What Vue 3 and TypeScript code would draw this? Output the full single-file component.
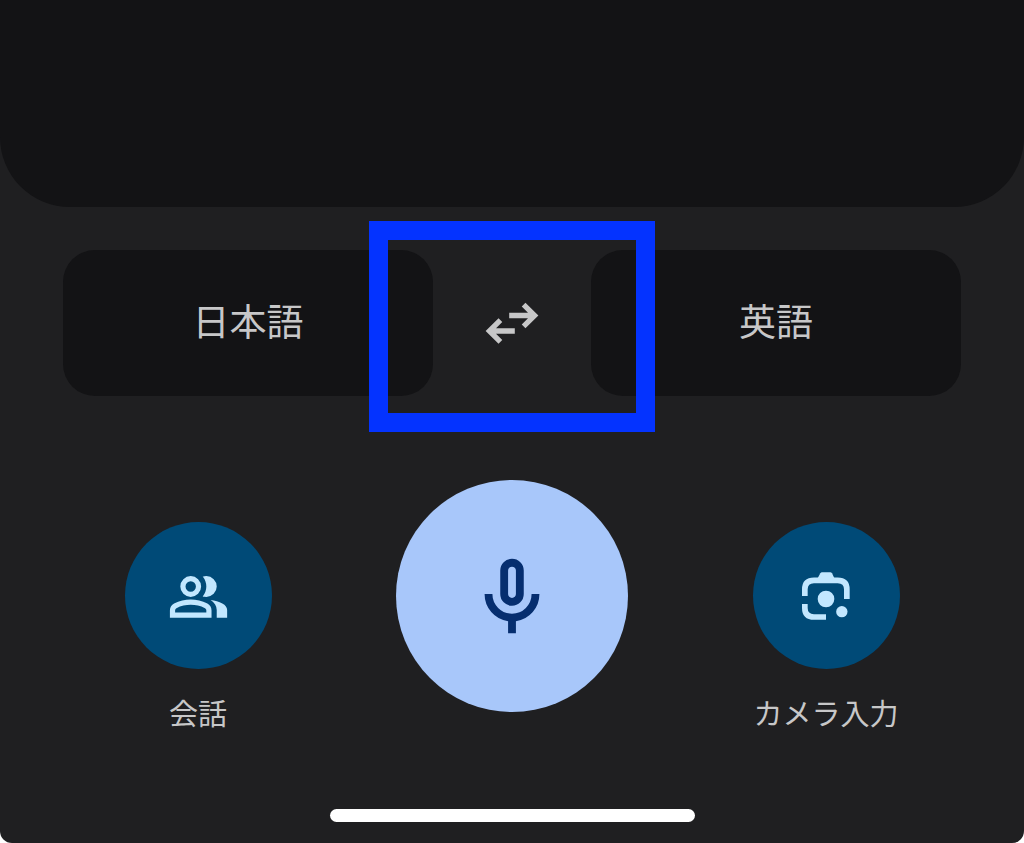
<script setup lang="ts">
import { ref } from 'vue'

const source = ref<string>('日本語')
const target = ref<string>('英語')

function swap(): void {
  const previous = source.value
  source.value = target.value
  target.value = previous
}
</script>

<template>
  <main class="screen">
    <section class="panel" aria-label="翻訳"></section>

    <div class="languages">
      <button type="button" class="language">{{ source }}</button>
      <div class="swap-cell">
        <button type="button" class="swap" aria-label="言語を入れ替え" @click="swap">
          <svg class="swap-icon" viewBox="0 0 56 46" fill="none" stroke="currentColor" stroke-width="5.3" aria-hidden="true">
            <path d="M25.2 15.5H50M39.6 4.7 50.6 15.5 39.6 26.3" />
            <path d="M30.8 31H6M16.4 20.2 5.4 31 16.4 41.8" />
          </svg>
        </button>
        <span class="highlight"></span>
      </div>
      <button type="button" class="language">{{ target }}</button>
    </div>

    <nav class="actions">
      <div class="action">
        <button type="button" class="round" aria-labelledby="talk-label">
          <svg class="icon" viewBox="-20 -986 984 984" fill="currentColor" aria-hidden="true">
            <path d="M40-160v-112q0-34 17.5-62.5T104-378q62-31 126-46.5T360-440q66 0 130 15.5T616-378q29 15 46.5 43.5T680-272v112H40Zm720 0v-120q0-44-24.5-84.5T666-434q51 6 96 20.500t84 35.500q36 20 55 44.500t19 53.500v120H760ZM360-480q-66 0-113-47t-47-113q0-66 47-113t113-47q66 0 113 47t47 113q0 66-47 113t-113 47Zm400-160q0 66-47 113t-113 47q-11 0-28-2.500t-28-5.500q27-32 41.500-71t14.500-81q0-42-14.500-81T544-792q14-5 28-6.500t28-1.500q66 0 113 47t47 113ZM120-240h480v-32q0-11-5.500-20T580-306q-54-27-109-40.500T360-360q-56 0-111 13.500T140-306q-9 5-14.500 14t-5.500 20v32Zm240-320q33 0 56.500-23.500T440-640q0-33-23.500-56.500T360-720q-33 0-56.500 23.500T280-640q0 33 23.500 56.500T360-560Z" />
          </svg>
        </button>
        <span id="talk-label" class="label">会話</span>
      </div>

      <button type="button" class="mic" aria-label="音声入力">
        <svg class="mic-icon" viewBox="0 -980 960 960" fill="currentColor" aria-hidden="true">
          <path d="M480-400q-50 0-85-35t-35-85v-240q0-50 35-85t85-35q50 0 85 35t35 85v240q0 50-35 85t-85 35Zm-40 280v-123q-104-14-172-93t-68-184h80q0 83 58.5 141.5T480-320q83 0 141.5-58.5T680-520h80q0 105-68 184t-172 93v123h-80Zm40-360q17 0 28.5-11.5T520-520v-240q0-17-11.5-28.5T480-800q-17 0-28.5 11.5T440-760v240q0 17 11.5 28.5T480-480Z" />
        </svg>
      </button>

      <div class="action">
        <button type="button" class="round" aria-labelledby="camera-label">
          <svg class="icon" viewBox="28 12 192 192" fill="currentColor" aria-hidden="true">
            <g fill="none" stroke="currentColor" stroke-width="17">
              <path d="M60.5 108V88Q60.5 61 88 61H159Q186.5 61 186.5 88V117" />
              <path d="M60.5 132V144Q60.5 171 88 171H124" />
            </g>
            <path d="M98 56 107 40Q109 37 112 37H137Q140 37 142 40L150 56Z" />
            <circle cx="124" cy="117" r="25" />
            <circle cx="171.5" cy="155" r="17" />
          </svg>
        </button>
        <span id="camera-label" class="label">カメラ入力</span>
      </div>
    </nav>

    <div class="home-bar"></div>
  </main>
</template>

<style>
body {
  margin: 0;
  background: #ffffff;
}
</style>

<style scoped>
.screen {
  box-sizing: border-box;
  display: flex;
  flex-direction: column;
  min-height: 100vh;
  padding-bottom: 21px;
  overflow: hidden;
  border-radius: 0 0 12px 12px;
  background: #1f1f21;
  color: #c7c7c8;
  font-family: "Noto Sans CJK JP", sans-serif;
}

button {
  display: flex;
  align-items: center;
  justify-content: center;
  box-sizing: border-box;
  margin: 0;
  padding: 0;
  border: 0;
  font: inherit;
  color: inherit;
  cursor: pointer;
}

.panel {
  flex: 1 0 207px;
  border-radius: 0 0 70px 70px;
  background: #131315;
}

.languages {
  display: grid;
  grid-template-columns: 1fr 158px 1fr;
  padding: 43px 63px 0;
}

.language {
  height: 146px;
  padding-bottom: 6px;
  border-radius: 32px;
  background: #131315;
  font-size: 37px;
  line-height: 48px;
}

.swap-cell {
  position: relative;
  display: flex;
}

.swap {
  flex: 1;
  background: transparent;
}

.swap-icon {
  width: 56px;
  height: 46px;
}

.highlight {
  position: absolute;
  inset: -29px -64px -36px;
  border: 19px solid #0433ff;
  pointer-events: none;
}

.actions {
  display: grid;
  grid-template-columns: repeat(3, 1fr);
  justify-items: center;
  align-items: start;
  padding: 84px 41px 0;
}

.action {
  display: flex;
  flex-direction: column;
  align-items: center;
  gap: 24px;
  padding-top: 42px;
}

.round {
  width: 147px;
  height: 147px;
  border-radius: 50%;
  background: #004a77;
  color: #c2e7ff;
}

.icon {
  width: 64px;
  height: 64px;
}

.mic {
  width: 232px;
  height: 232px;
  border-radius: 50%;
  background: #a8c7fa;
  color: #062e6f;
}

.mic-icon {
  width: 94px;
  height: 94px;
}

.label {
  font-size: 29px;
  line-height: 38px;
  white-space: nowrap;
}

.home-bar {
  width: 365px;
  max-width: 80%;
  height: 13px;
  margin: 78px auto 0;
  border-radius: 7px;
  background: #ffffff;
}
</style>
